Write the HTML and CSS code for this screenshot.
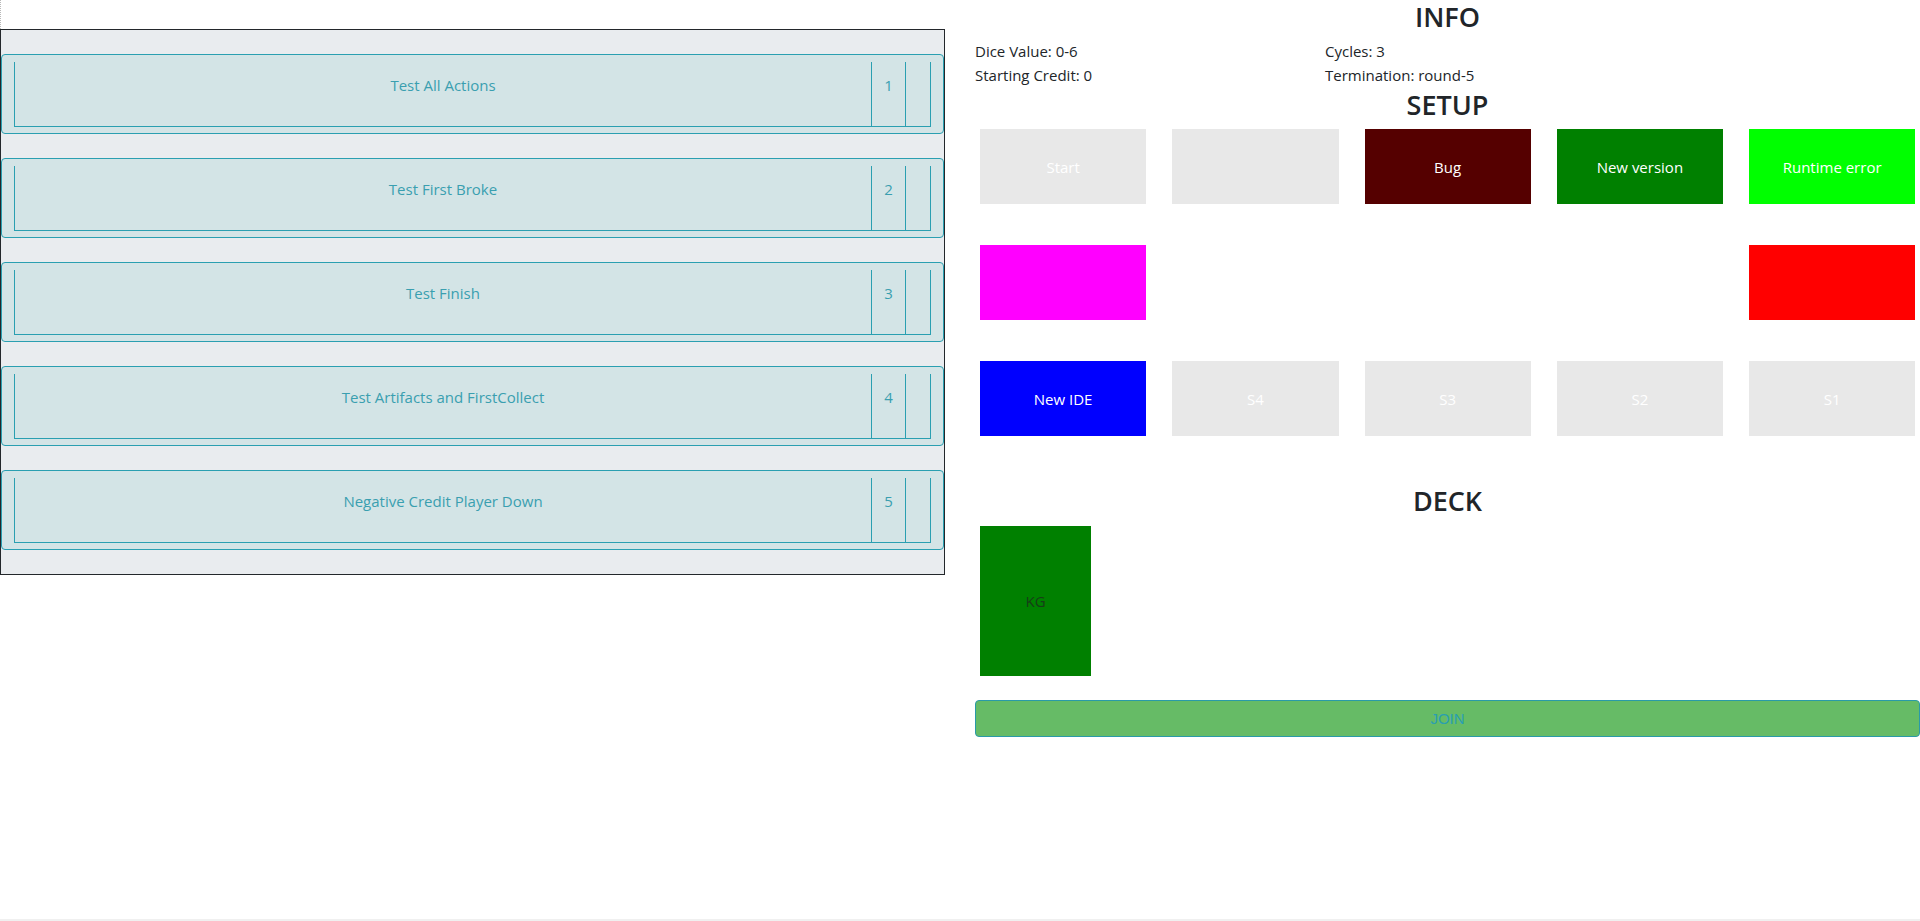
FILE: index.html
```html
<!DOCTYPE html>
<html lang="en">
<head>
<meta charset="utf-8">
<title>Game Setup</title>
<link rel="stylesheet" href="styles.css">
</head>
<body>
<div class="page">
  <section class="left-col">
    <div class="top-stub"></div>
    <div class="test-panel">
      <div class="test-card">
        <div class="test-row">
          <div class="cell name">Test All Actions</div>
          <div class="cell num">1</div>
          <div class="cell extra"></div>
        </div>
      </div>
      <div class="test-card">
        <div class="test-row">
          <div class="cell name">Test First Broke</div>
          <div class="cell num">2</div>
          <div class="cell extra"></div>
        </div>
      </div>
      <div class="test-card">
        <div class="test-row">
          <div class="cell name">Test Finish</div>
          <div class="cell num">3</div>
          <div class="cell extra"></div>
        </div>
      </div>
      <div class="test-card">
        <div class="test-row">
          <div class="cell name">Test Artifacts and FirstCollect</div>
          <div class="cell num">4</div>
          <div class="cell extra"></div>
        </div>
      </div>
      <div class="test-card">
        <div class="test-row">
          <div class="cell name">Negative Credit Player Down</div>
          <div class="cell num">5</div>
          <div class="cell extra"></div>
        </div>
      </div>
    </div>
  </section>

  <section class="right-col">
    <h2 class="heading heading-info">INFO</h2>
    <div class="info-grid">
      <div>Dice Value: 0-6</div>
      <div>Cycles: 3</div>
      <div>Starting Credit: 0</div>
      <div>Termination: round-5</div>
    </div>
    <h2 class="heading heading-setup">SETUP</h2>
    <div class="board">
      <div class="tile t-gray">Start</div>
      <div class="tile t-gray"></div>
      <div class="tile t-bug">Bug</div>
      <div class="tile t-newver">New version</div>
      <div class="tile t-runtime">Runtime error</div>

      <div class="tile t-magenta"></div>
      <div class="tile t-empty"></div>
      <div class="tile t-empty"></div>
      <div class="tile t-empty"></div>
      <div class="tile t-red"></div>

      <div class="tile t-blue">New IDE</div>
      <div class="tile t-gray">S4</div>
      <div class="tile t-gray">S3</div>
      <div class="tile t-gray">S2</div>
      <div class="tile t-gray">S1</div>
    </div>
    <h2 class="heading heading-deck">DECK</h2>
    <div class="deck">
      <div class="deck-card">KG</div>
    </div>
    <button class="join-btn" type="button">JOIN</button>
  </section>
</div>
<div class="bottom-rule"></div>
</body>
</html>
```

FILE: styles.css
```css
html, body {
  margin: 0;
  padding: 0;
  background: #ffffff;
}

body {
  font-family: "Open Sans", "Noto Sans", "Liberation Sans", sans-serif;
  font-size: 15px;
  color: #212529;
}

.page {
  display: flex;
  gap: 30px;
  width: 1920px;
}

.left-col {
  width: 945px;
  flex: 0 0 945px;
}

.top-stub {
  height: 29px;
  width: 1px;
  box-sizing: border-box;
  border-left: 1px dotted #b8b8b8;
}

.test-panel {
  box-sizing: border-box;
  width: 945px;
  border: 1px solid #23272b;
  background: #e9ecef;
  padding: 24px 0;
  display: flex;
  flex-direction: column;
  gap: 24px;
}

.test-card {
  box-sizing: border-box;
  height: 80px;
  margin: 0;
  border: 1px solid #2a9fb1;
  border-radius: 4px;
  background: #d3e4e6;
  padding: 7px 12px 6px;
}

.test-row {
  box-sizing: border-box;
  height: 65px;
  display: flex;
  border-left: 1px solid #2a9fb1;
  border-right: 1px solid #2a9fb1;
  border-bottom: 1px solid #2a9fb1;
  color: #3a9fb0;
}

.cell {
  box-sizing: border-box;
  padding-top: 11px;
  line-height: 24px;
  text-align: center;
}

.cell.name {
  flex: 1 1 auto;
  border-right: 1px solid #2a9fb1;
}

.cell.num {
  flex: 0 0 34px;
  border-right: 1px solid #2a9fb1;
}

.cell.extra {
  flex: 0 0 24px;
}

.right-col {
  width: 945px;
  flex: 0 0 945px;
  display: flex;
  flex-direction: column;
}

.heading {
  margin: 0;
  text-align: center;
  font-size: 27px;
  font-weight: 600;
  line-height: 34px;
  color: #212529;
}

.heading-setup {
  margin-top: 1px;
}

.heading-deck {
  margin-top: 48px;
}

.info-grid {
  margin-top: 5px;
  display: grid;
  grid-template-columns: 350px 1fr;
  line-height: 24px;
}

.board {
  margin-top: 7px;
  padding-left: 5px;
  display: grid;
  grid-template-columns: repeat(5, 166.25px);
  grid-auto-rows: 75px;
  column-gap: 26px;
  row-gap: 41px;
}

.tile {
  display: flex;
  align-items: center;
  justify-content: center;
  color: #ffffff;
}

.t-gray { background: #e8e8e8; }
.t-bug { background: #550000; }
.t-newver { background: #008000; }
.t-runtime { background: #00ff00; }
.t-magenta { background: #ff00ff; }
.t-red { background: #ff0000; }
.t-blue { background: #0000ff; }
.t-empty { background: transparent; }

.deck {
  margin-top: 8px;
  padding-left: 5px;
  display: flex;
}

.deck-card {
  width: 111px;
  height: 150px;
  background: #008000;
  color: #173d17;
  display: flex;
  align-items: center;
  justify-content: center;
}

.join-btn {
  margin-top: 24px;
  box-sizing: border-box;
  width: 945px;
  height: 37px;
  border: 1px solid #2a9aa8;
  border-radius: 4px;
  background: #66bb66;
  color: #2a9fb1;
  font-family: "Liberation Sans", "Open Sans", sans-serif;
  font-size: 15px;
  font-weight: 400;
  padding: 0;
  cursor: pointer;
}

.bottom-rule {
  position: fixed;
  left: 0;
  right: 0;
  bottom: 0;
  height: 2px;
  background: #f0f0f0;
}
```
